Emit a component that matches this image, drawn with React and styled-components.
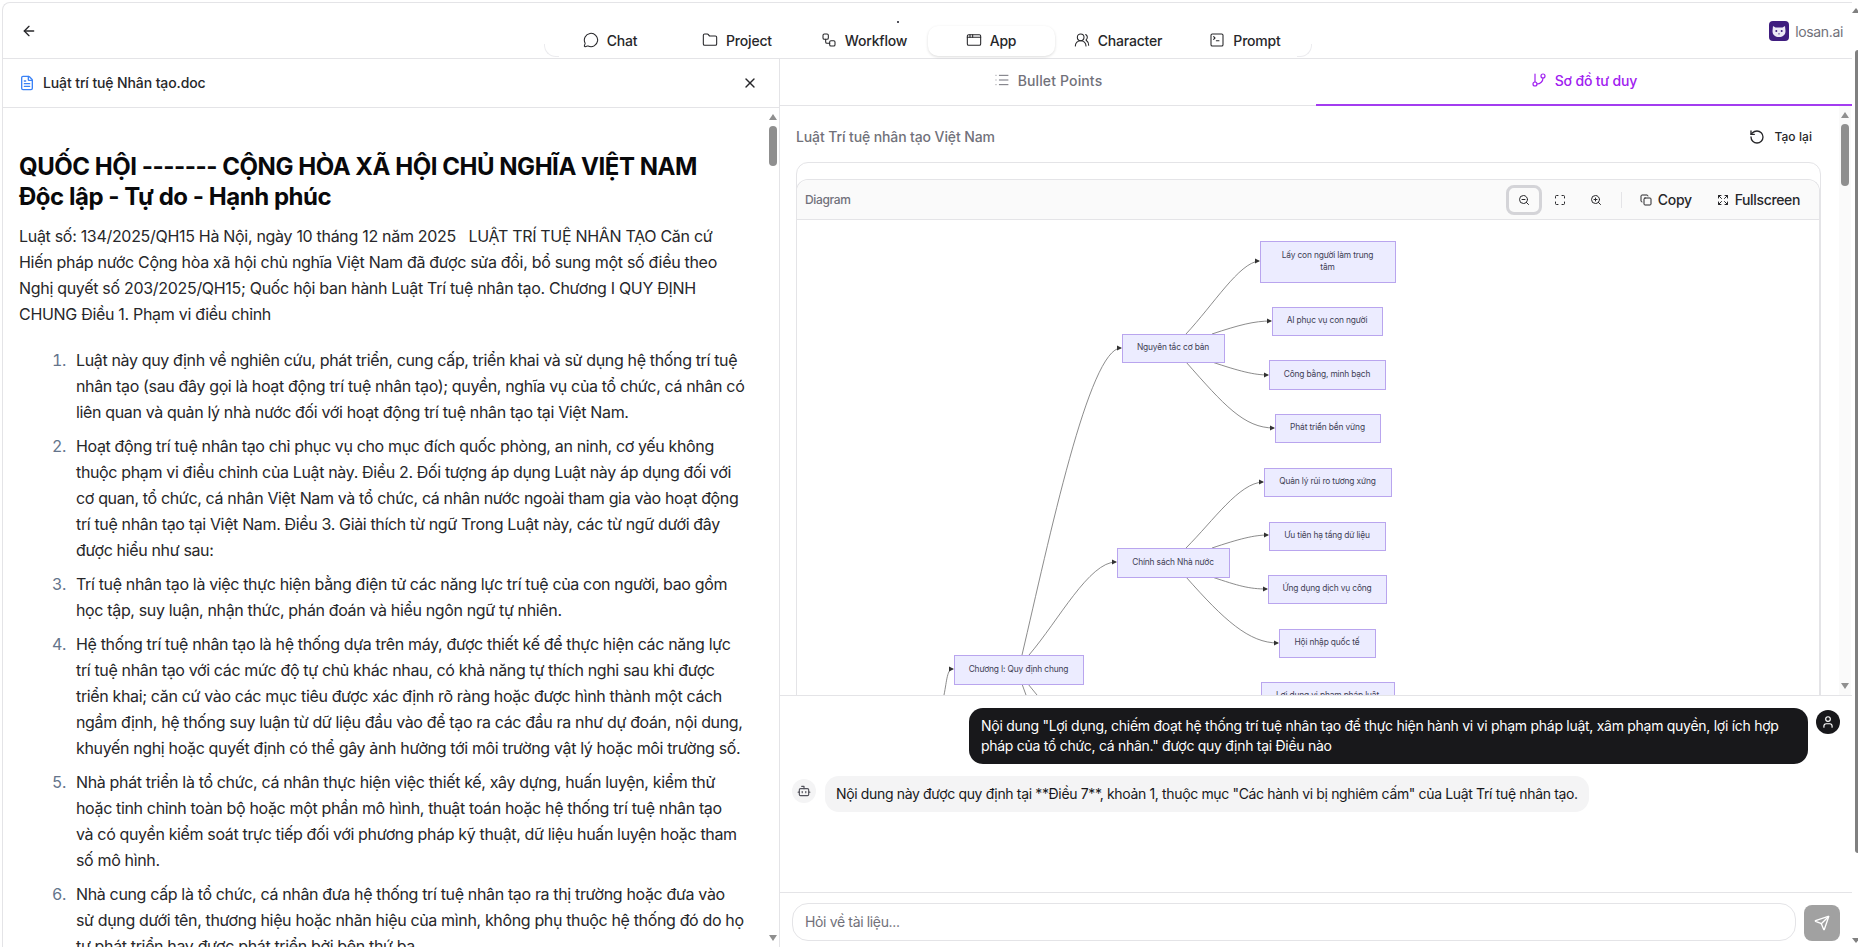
import React from 'react'
import styled, { createGlobalStyle } from 'styled-components'
import {
  AppWindow, ArrowLeft, Bot, Copy, Expand, FileText, Folder, GitBranch, List, Maximize,
  MessageCircle, RotateCcw, Send, SquareTerminal, User, UsersRound, Workflow, X, ZoomIn, ZoomOut,
} from 'lucide-react'

const GlobalStyle = createGlobalStyle`
  * { box-sizing: border-box; }
  html, body { margin: 0; height: 100%; background: #fff; overflow: hidden; }
  body { font-family: Inter, "Noto Sans", sans-serif; color: #18181b; letter-spacing: -0.022em; }
`

const Page = styled.div`
  position: relative;
  width: 1858px;
  height: 947px;
  overflow: hidden;
  padding: 2px 6px 0 3px;
`

const Frame = styled.div`
  height: 100%;
  display: flex;
  flex-direction: column;
  margin-left: -1px;
  border-top: 1px solid #e4e4e7;
  border-left: 1px solid #e4e4e7;
  border-top-left-radius: 8px;
`

const Header = styled.header`
  position: relative;
  height: 56px;
  flex: none;
  display: flex;
  justify-content: center;
  border-bottom: 1px solid #e4e4e7;
`

const BackButton = styled.button`
  position: absolute;
  left: 18px;
  top: 20px;
  padding: 0;
  border: 0;
  background: none;
  display: flex;
  color: #27272a;
`

const NavTabs = styled.nav`
  position: relative;
  width: 768px;
  height: 32px;
  margin-top: 22px;
  padding: 0 3px;
  display: grid;
  grid-template-columns: repeat(6, 1fr);
  letter-spacing: -0.012em;

  &::before,
  &::after {
    content: '';
    position: absolute;
    bottom: 0;
    width: 14px;
    height: 12px;
    border-bottom: 1px solid #ececef;
    pointer-events: none;
  }

  &::before {
    left: 0;
    border-left: 1px solid #ececef;
    border-bottom-left-radius: 12px;
  }

  &::after {
    right: 0;
    border-right: 1px solid #ececef;
    border-bottom-right-radius: 12px;
  }
`

const TinyDot = styled.span`
  position: absolute;
  left: 353px;
  top: -4px;
  width: 2px;
  height: 2px;
  background: #52525b;
`

const NavTab = styled.div`
  display: flex;
  align-items: center;
  justify-content: center;
  gap: 8px;
  height: 30px;
  margin-top: 1px;
  padding-bottom: 2px;
  font-size: 14px;
  font-weight: 500;
  color: #27272a;
  border-radius: 10px;
  background: ${p => (p.$active ? '#fff' : 'transparent')};
  box-shadow: ${p => (p.$active ? '0 1px 3px rgba(0,0,0,.14)' : 'none')};
`

const Brand = styled.div`
  position: absolute;
  right: 9px;
  top: 18px;
  display: flex;
  align-items: center;
  gap: 6px;
  font-size: 14px;
  color: #71717a;
`

const Body = styled.div`
  flex: 1;
  min-height: 0;
  display: flex;
`

const DocPanel = styled.section`
  position: relative;
  width: 777px;
  flex: none;
  display: flex;
  flex-direction: column;
  border-right: 1px solid #e4e4e7;
`

const DocHeader = styled.div`
  height: 49px;
  flex: none;
  display: flex;
  align-items: center;
  justify-content: space-between;
  padding: 0 21px 1px 16px;
  border-bottom: 1px solid #e4e4e7;
`

const DocName = styled.div`
  display: flex;
  align-items: center;
  gap: 8px;
  font-size: 14px;
  font-weight: 500;
  letter-spacing: -0.008em;
  color: #27272a;
`

const DocBody = styled.div`
  flex: 1;
  min-height: 0;
  overflow: hidden;
  padding: 44px 33px 0 16px;
`

const DocTitle = styled.h1`
  margin: 0 0 11px;
  font-size: 24px;
  line-height: 30px;
  font-weight: 700;
  letter-spacing: -0.0195em;
  color: #09090b;
`

const DocText = styled.p`
  margin: 0 0 20px;
  font-size: 16px;
  line-height: 26px;
  letter-spacing: -0.019em;
  color: #27272a;
  white-space: pre-wrap;
`

const DocList = styled.ol`
  margin: 0 -1px 0 0;
  padding: 0 0 0 51px;
  font-size: 16px;
  line-height: 26px;
  color: #27272a;
`

const DocItem = styled.li`
  margin-bottom: 8px;
  padding-left: 6px;
  &::marker { color: #64748b; }
`

const Scrollbar = styled.div`
  position: absolute;
  right: ${p => p.$right}px;
  top: ${p => p.$top}px;
  height: ${p => p.$height}px;
  width: 12px;
  background: ${p => p.$track || 'transparent'};
`

const ScrollThumb = styled.div`
  position: absolute;
  left: 2px;
  top: ${p => p.$top}px;
  height: ${p => p.$height}px;
  width: 8px;
  border-radius: 4px;
  background: #8f8f8f;
`

const ScrollArrow = styled.div`
  position: absolute;
  left: 2px;
  ${p => (p.$down ? 'bottom: 6px;' : 'top: 6px;')}
  width: 0;
  height: 0;
  border-left: 4px solid transparent;
  border-right: 4px solid transparent;
  ${p => (p.$down ? 'border-top: 6px solid #8f8f8f;' : 'border-bottom: 6px solid #8f8f8f;')}
`

const OuterThumb = styled.div`
  position: absolute;
  right: 0;
  top: 50px;
  width: 3px;
  height: 803px;
  background: #808080;
  border-radius: 3px 0 0 3px;
`

const OuterArrow = styled.div`
  position: absolute;
  right: -2px;
  ${p => (p.$down ? 'bottom: 4px;' : 'top: 8px;')}
  width: 0;
  height: 0;
  border-left: 4px solid transparent;
  border-right: 4px solid transparent;
  ${p => (p.$down ? 'border-top: 5px solid #808080;' : 'border-bottom: 5px solid #808080;')}
`

const WorkPanel = styled.section`
  flex: 1;
  min-width: 0;
  display: flex;
  flex-direction: column;
`

const ViewTabs = styled.div`
  height: 47px;
  flex: none;
  display: grid;
  grid-template-columns: 1fr 1fr;
  border-bottom: 1px solid #e4e4e7;
`

const ViewTab = styled.div`
  display: flex;
  align-items: center;
  justify-content: center;
  gap: 8px;
  padding-bottom: 3px;
  font-size: 14px;
  font-weight: 500;
  letter-spacing: ${p => (p.$active ? '-0.012em' : '0.01em')};
  color: ${p => (p.$active ? '#a020f0' : '#71717a')};
  border-bottom: 2px solid ${p => (p.$active ? '#a33cf0' : 'transparent')};
  margin-bottom: -1px;
`

const MapArea = styled.div`
  position: relative;
  height: 590px;
  flex: none;
  overflow: hidden;
  padding: 0 31px 0 16px;
  border-bottom: 1px solid #e4e4e7;
`

const MapTitleRow = styled.div`
  height: 56px;
  display: flex;
  align-items: center;
  justify-content: space-between;
  padding-top: 5px;
  padding-right: 9px;
`

const MapTitle = styled.span`
  font-size: 14px;
  font-weight: 500;
  letter-spacing: -0.008em;
  color: #71717a;
`

const Redo = styled.span`
  display: flex;
  align-items: center;
  gap: 9px;
  font-size: 12px;
  font-weight: 500;
  letter-spacing: 0.006em;
  color: #27272a;
`

const DiagramCard = styled.div`
  border: 1px solid #e4e4e7;
  border-radius: 12px;
  padding-top: 16px;
  height: 600px;
`

const DiagramFrame = styled.div`
  border: 1px solid #e4e4e7;
  border-bottom: 0;
  margin-left: -1px;
  border-radius: 12px 12px 0 0;
  height: 100%;
`

const DiagramBar = styled.div`
  height: 40px;
  display: flex;
  align-items: center;
  justify-content: space-between;
  padding: 0 19px 0 8px;
  background: #fafafa;
  border-bottom: 1px solid #e4e4e7;
  border-radius: 12px 12px 0 0;
`

const DiagramLabel = styled.span`
  font-size: 12px;
  font-weight: 500;
  color: #71717a;
`

const DiagramTools = styled.div`
  display: flex;
  align-items: center;
  color: #27272a;
`

const ToolIcon = styled.span`
  width: 36px;
  height: 30px;
  display: flex;
  align-items: center;
  justify-content: center;
  border-radius: 8px;
  border: ${p => (p.$focus ? '3px solid #d4d4d8' : '0')};
`

const ToolDivider = styled.span`
  width: 1px;
  height: 16px;
  margin: 0 18px 0 7px;
  background: #e4e4e7;
`

const ToolText = styled.span`
  display: flex;
  align-items: center;
  gap: 6px;
  font-size: 14px;
  font-weight: 500;
  margin-left: ${p => p.$gap || 0}px;
`

const Diagram = styled.svg`
  display: block;
  width: 1025px;
  height: 475px;
`

const NodeText = styled.text`
  font-family: Inter, sans-serif;
  font-size: 8.4px;
  letter-spacing: -0.018em;
  fill: #3f3f55;
  text-anchor: middle;
`

const ChatLog = styled.div`
  flex: 1;
  min-height: 0;
  display: flex;
  flex-direction: column;
  gap: 12px;
  padding: 12px 12px 0 12px;
  border-bottom: 1px solid #e4e4e7;
`

const Row = styled.div`
  display: flex;
  align-items: flex-start;
  gap: ${p => (p.$mine ? 8 : 9)}px;
  justify-content: ${p => (p.$mine ? 'flex-end' : 'flex-start')};
`

const Avatar = styled.span`
  width: 24px;
  height: 24px;
  flex: none;
  margin-top: ${p => (p.$mine ? 2 : 3)}px;
  border-radius: 50%;
  display: flex;
  align-items: center;
  justify-content: center;
  background: ${p => (p.$mine ? '#18181b' : '#f4f4f5')};
  color: ${p => (p.$mine ? '#fff' : '#52525b')};
`

const Bubble = styled.div`
  font-size: 14px;
  line-height: 20px;
  padding: ${p => (p.$mine ? '8px 12px' : '8px 11px')};
  border-radius: 14px;
  letter-spacing: ${p => (p.$mine ? '-0.02em' : '-0.025em')};
  background: ${p => (p.$mine ? '#18181b' : '#f4f4f5')};
  color: ${p => (p.$mine ? '#fff' : '#18181b')};
  width: ${p => (p.$mine ? '839px' : 'auto')};
`

const Composer = styled.div`
  height: 54px;
  flex: none;
  display: flex;
  gap: 8px;
  align-items: flex-start;
  padding: 10px 12px 0 12px;
`

const ComposerInput = styled.div`
  flex: 1;
  height: 38px;
  display: flex;
  align-items: center;
  padding: 0 12px 2px;
  border: 1px solid #e4e4e7;
  border-radius: 16px;
  font-size: 14px;
  color: #71717a;
`

const SendButton = styled.span`
  width: 36px;
  height: 36px;
  margin-top: 2px;
  flex: none;
  display: flex;
  align-items: center;
  justify-content: center;
  border-radius: 8px;
  background: #a1a1a1;
  color: #fff;
`

const navItems = [
  { label: 'Chat', icon: MessageCircle },
  { label: 'Project', icon: Folder },
  { label: 'Workflow', icon: Workflow },
  { label: 'App', icon: AppWindow, active: true },
  { label: 'Character', icon: UsersRound },
  { label: 'Prompt', icon: SquareTerminal },
]

const clauses = [
  'Luật này quy định về nghiên cứu, phát triển, cung cấp, triển khai và sử dụng hệ thống trí tuệ nhân tạo (sau đây gọi là hoạt động trí tuệ nhân tạo); quyền, nghĩa vụ của tổ chức, cá nhân có liên quan và quản lý nhà nước đối với hoạt động trí tuệ nhân tạo tại Việt Nam.',
  'Hoạt động trí tuệ nhân tạo chỉ phục vụ cho mục đích quốc phòng, an ninh, cơ yếu không thuộc phạm vi điều chỉnh của Luật này. Điều 2. Đối tượng áp dụng Luật này áp dụng đối với cơ quan, tổ chức, cá nhân Việt Nam và tổ chức, cá nhân nước ngoài tham gia vào hoạt động trí tuệ nhân tạo tại Việt Nam. Điều 3. Giải thích từ ngữ Trong Luật này, các từ ngữ dưới đây được hiểu như sau:',
  'Trí tuệ nhân tạo là việc thực hiện bằng điện tử các năng lực trí tuệ của con người, bao gồm học tập, suy luận, nhận thức, phán đoán và hiểu ngôn ngữ tự nhiên.',
  'Hệ thống trí tuệ nhân tạo là hệ thống dựa trên máy, được thiết kế để thực hiện các năng lực trí tuệ nhân tạo với các mức độ tự chủ khác nhau, có khả năng tự thích nghi sau khi được triển khai; căn cứ vào các mục tiêu được xác định rõ ràng hoặc được hình thành một cách ngầm định, hệ thống suy luận từ dữ liệu đầu vào để tạo ra các đầu ra như dự đoán, nội dung, khuyến nghị hoặc quyết định có thể gây ảnh hưởng tới môi trường vật lý hoặc môi trường số.',
  'Nhà phát triển là tổ chức, cá nhân thực hiện việc thiết kế, xây dựng, huấn luyện, kiểm thử hoặc tinh chỉnh toàn bộ hoặc một phần mô hình, thuật toán hoặc hệ thống trí tuệ nhân tạo và\u00a0có quyền kiểm soát trực tiếp đối với phương pháp kỹ thuật, dữ liệu huấn luyện hoặc tham số mô hình.',
  'Nhà cung cấp là tổ chức, cá nhân đưa hệ thống trí tuệ nhân tạo ra thị trường hoặc đưa vào sử\u00a0dụng dưới tên, thương hiệu hoặc nhãn hiệu của mình, không phụ thuộc hệ thống đó do họ tự phát triển hay được phát triển bởi bên thứ ba.',
]

// x, y, w, h in page coordinates, the svg viewBox starts at the diagram's corner
const nodes = [
  { x: 1261, y: 241, w: 135, h: 41, lines: ['Lấy con người làm trung', 'tâm'] },
  { x: 1273, y: 307, w: 110, h: 28, lines: ['AI phục vụ con người'] },
  { x: 1270, y: 360, w: 116, h: 29, lines: ['Công bằng, minh bạch'] },
  { x: 1276, y: 414, w: 105, h: 28, lines: ['Phát triển bền vững'] },
  { x: 1123, y: 334, w: 102, h: 28, lines: ['Nguyên tắc cơ bản'] },
  { x: 1265, y: 468, w: 127, h: 28, lines: ['Quản lý rủi ro tương xứng'] },
  { x: 1270, y: 522, w: 116, h: 28, lines: ['Ưu tiên hạ tầng dữ liệu'] },
  { x: 1269, y: 575, w: 118, h: 28, lines: ['Ứng dụng dịch vụ công'] },
  { x: 1280, y: 629, w: 96, h: 28, lines: ['Hội nhập quốc tế'] },
  { x: 1118, y: 548, w: 112, h: 29, lines: ['Chính sách Nhà nước'] },
  { x: 955, y: 655, w: 129, h: 29, lines: ['Chương I: Quy định chung'] },
  { x: 1262, y: 682, w: 133, h: 28, lines: ['Lợi dụng vi phạm pháp luật'] },
]

const edges = [
  'M1187 334C1215 304 1240 263 1260 261',
  'M1213 334C1240 325 1255 321 1272 321',
  'M1213 362C1240 371 1255 375 1269 375',
  'M1187 362C1225 405 1245 428 1275 428',
  'M1187 548C1215 520 1240 483 1264 482',
  'M1213 548C1240 539 1255 535 1269 535',
  'M1213 577C1240 586 1250 589 1268 589',
  'M1187 577C1225 620 1250 643 1279 643',
  'M1023 655C1050 540 1090 348 1122 348',
  'M1030 655C1060 620 1090 562 1117 562',
  'M1023 684L1027 695',
  'M1029 684L1038 695',
  'M945 695C948 680 948 669 954 669',
]

const arrows = [
  [1261, 261], [1273, 321], [1270, 375], [1276, 428], [1265, 482], [1270, 535], [1269, 589], [1280, 643],
  [1123, 348], [1118, 562], [955, 669],
]

function BrandMark() {
  return (
    <svg width="20" height="20" viewBox="0 0 20 20">
      <rect width="20" height="20" rx="4" fill="#3f1d7f" />
      <path d="M4 5l2.5 1.5h7L16 5l.5 5c0 4-3 6-6.5 6s-6.5-2-6.5-6z" fill="#ece9f5" />
      <circle cx="7.3" cy="10" r="1" fill="#3f1d7f" />
      <circle cx="12.7" cy="10" r="1" fill="#3f1d7f" />
      <path d="M9 12.6h2l-1 1.2z" fill="#3f1d7f" />
    </svg>
  )
}

function MindMap() {
  return (
    <Diagram viewBox="798 220 1025 475">
      {edges.map(d => <path key={d} d={d} fill="none" stroke="#6f6f6f" strokeWidth="0.8" />)}
      {arrows.map(([x, y]) => (
        <path key={`${x}-${y}`} d={`M${x - 5} ${y - 2.5}L${x} ${y}L${x - 5} ${y + 2.5}z`} fill="#333" />
      ))}
      {nodes.map(n => (
        <g key={n.lines[0]}>
          <rect x={n.x + 0.5} y={n.y + 0.5} width={n.w} height={n.h} fill="#ececff" stroke="#b9a5ee" strokeWidth="1" />
          {n.lines.map((line, i) => (
            <NodeText key={line} x={n.x + n.w / 2} y={n.y + n.h / 2 + 2.4 + (i - (n.lines.length - 1) / 2) * 12}>
              {line}
            </NodeText>
          ))}
        </g>
      ))}
    </Diagram>
  )
}

export default function App() {
  return (
    <Page>
      <GlobalStyle />
      <Frame>
        <Header>
          <BackButton aria-label="Quay lại"><ArrowLeft size={16} /></BackButton>
          <NavTabs>
            <TinyDot />
            {navItems.map(({ label, icon: Icon, active }) => (
              <NavTab key={label} $active={active}>
                <Icon size={16} strokeWidth={1.6} />
                {label}
              </NavTab>
            ))}
          </NavTabs>
          <Brand><BrandMark />losan.ai</Brand>
        </Header>
        <Body>
          <DocPanel>
            <DocHeader>
              <DocName>
                <FileText size={16} color="#3b82f6" />
                Luật trí tuệ Nhân tạo.doc
              </DocName>
              <X size={16} color="#27272a" />
            </DocHeader>
            <DocBody>
              <DocTitle>QUỐC HỘI ------- CỘNG HÒA XÃ HỘI CHỦ NGHĨA VIỆT NAM<br />Độc lập - Tự do - Hạnh phúc</DocTitle>
              <DocText>
                {'Luật số: 134/2025/QH15 Hà Nội, ngày 10 tháng 12 năm 2025   LUẬT TRÍ TUỆ NHÂN TẠO Căn cứ Hiến pháp nước Cộng hòa xã hội chủ nghĩa Việt Nam đã được sửa đổi, bổ sung một số điều theo Nghị quyết số 203/2025/QH15; Quốc hội ban hành Luật Trí tuệ nhân tạo. Chương I QUY ĐỊNH CHUNG Điều 1. Phạm vi điều chỉnh'}
              </DocText>
              <DocList>
                {clauses.map(c => <DocItem key={c}>{c}</DocItem>)}
              </DocList>
            </DocBody>
            <Scrollbar $right={0} $top={49} $height={839}>
              <ScrollArrow />
              <ScrollThumb $top={18} $height={40} />
              <ScrollArrow $down />
            </Scrollbar>
          </DocPanel>
          <WorkPanel>
            <ViewTabs>
              <ViewTab><List size={16} strokeWidth={1.5} />Bullet Points</ViewTab>
              <ViewTab $active><GitBranch size={16} strokeWidth={1.8} />Sơ đồ tư duy</ViewTab>
            </ViewTabs>
            <MapArea>
              <MapTitleRow>
                <MapTitle>Luật Trí tuệ nhân tạo Việt Nam</MapTitle>
                <Redo><RotateCcw size={16} />Tạo lại</Redo>
              </MapTitleRow>
              <DiagramCard>
                <DiagramFrame>
                  <DiagramBar>
                    <DiagramLabel>Diagram</DiagramLabel>
                    <DiagramTools>
                      <ToolIcon $focus><ZoomOut size={12} /></ToolIcon>
                      <ToolIcon><Maximize size={12} /></ToolIcon>
                      <ToolIcon><ZoomIn size={12} /></ToolIcon>
                      <ToolDivider />
                      <ToolText><Copy size={12} />Copy</ToolText>
                      <ToolText $gap={25}><Expand size={12} />Fullscreen</ToolText>
                    </DiagramTools>
                  </DiagramBar>
                  <MindMap />
                </DiagramFrame>
              </DiagramCard>
              <Scrollbar $right={1} $top={0} $height={589} $track="#fafafa">
                <ScrollArrow />
                <ScrollThumb $top={18} $height={62} />
                <ScrollArrow $down />
              </Scrollbar>
            </MapArea>
            <ChatLog>
              <Row $mine>
                <Bubble $mine>
                  Nội dung "Lợi dụng, chiếm đoạt hệ thống trí tuệ nhân tạo để thực hiện hành vi vi phạm pháp luật, xâm phạm quyền, lợi ích hợp pháp của tổ chức, cá nhân." được quy định tại Điều nào
                </Bubble>
                <Avatar $mine><User size={14} /></Avatar>
              </Row>
              <Row>
                <Avatar><Bot size={14} /></Avatar>
                <Bubble>
                  Nội dung này được quy định tại **Điều 7**, khoản 1, thuộc mục "Các hành vi bị nghiêm cấm" của Luật Trí tuệ nhân tạo.
                </Bubble>
              </Row>
            </ChatLog>
            <Composer>
              <ComposerInput>Hỏi về tài liệu...</ComposerInput>
              <SendButton><Send size={16} /></SendButton>
            </Composer>
          </WorkPanel>
        </Body>
      </Frame>
      <OuterThumb />
      <OuterArrow />
      <OuterArrow $down />
    </Page>
  )
}
